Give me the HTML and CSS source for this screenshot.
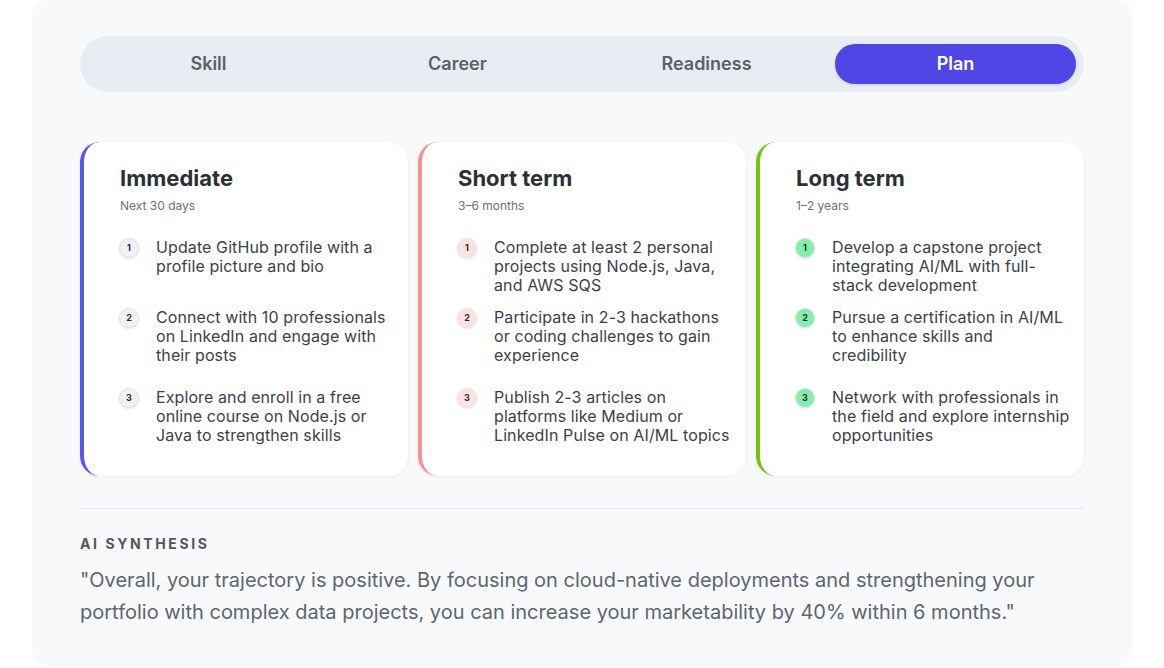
FILE: index.html
```html
<!DOCTYPE html>
<html>
<head>
 <title>Career Plan</title>
 <meta charset="utf-8">
 <link rel="stylesheet" href="styles.css">
</head>
<body>
<div class="panel">
	<div class="tab_bar">
		<div class="tab">Skill</div>
		<div class="tab">Career</div>
		<div class="tab">Readiness</div>
		<div class="tab active">Plan</div>
	</div>

	<div class="plan_cards">
		<div class="plan_card immediate">
			<div class="card_title">Immediate</div>
			<div class="card_sub">Next 30 days</div>
			<div class="step_list">
				<div class="step"><span class="badge">1</span><span class="step_text">Update GitHub profile with a profile picture and bio</span></div>
				<div class="step"><span class="badge">2</span><span class="step_text">Connect with 10 professionals on LinkedIn and engage with their posts</span></div>
				<div class="step last"><span class="badge">3</span><span class="step_text">Explore and enroll in a free online course on Node.js or Java to strengthen skills</span></div>
			</div>
		</div>
		<div class="plan_card short">
			<div class="card_title">Short term</div>
			<div class="card_sub">3–6 months</div>
			<div class="step_list">
				<div class="step"><span class="badge">1</span><span class="step_text">Complete at least 2 personal projects using Node.js, Java, and AWS SQS</span></div>
				<div class="step"><span class="badge">2</span><span class="step_text">Participate in 2-3 hackathons or coding challenges to gain experience</span></div>
				<div class="step last"><span class="badge">3</span><span class="step_text">Publish 2-3 articles on platforms like Medium or LinkedIn Pulse on AI/ML topics</span></div>
			</div>
		</div>
		<div class="plan_card long">
			<div class="card_title">Long term</div>
			<div class="card_sub">1–2 years</div>
			<div class="step_list">
				<div class="step"><span class="badge">1</span><span class="step_text">Develop a capstone project integrating AI/ML with full-stack development</span></div>
				<div class="step"><span class="badge">2</span><span class="step_text">Pursue a certification in AI/ML to enhance skills and credibility</span></div>
				<div class="step last"><span class="badge">3</span><span class="step_text">Network with professionals in the field and explore internship opportunities</span></div>
			</div>
		</div>
	</div>

	<div class="synthesis">
		<div class="synth_label">AI SYNTHESIS</div>
		<p class="synth_text">"Overall, your trajectory is positive. By focusing on cloud-native deployments and strengthening your portfolio with complex data projects, you can increase your marketability by 40% within 6 months."</p>
	</div>
</div>
</body>
</html>
```

FILE: styles.css
```css
	body {
		margin: 0;
		background: #ffffff;
		font-family: Inter, "Noto Sans", sans-serif;
	}

	.panel {
		box-sizing: border-box;
		margin-left: 32px;
		width: 1100px;
		height: 666px;
		padding: 36px 48px 0 48px;
		background: #f8f9fb;
		border-radius: 16px;
	}

	/* tabs */
	.tab_bar {
		display: flex;
		gap: 8px;
		padding: 8px;
		background: #e8edf4;
		border-radius: 28px;
	}

	.tab {
		flex: 1;
		height: 40px;
		line-height: 40px;
		text-align: center;
		font-size: 18px;
		font-weight: 600;
		color: #5b6168;
		border-radius: 20px;
	}

	.tab.active {
		background: #4f46e5;
		color: #ffffff;
		box-shadow: 0 1px 3px rgba(40, 40, 120, 0.18);
	}

	/* cards */
	.plan_cards {
		display: grid;
		grid-template-columns: 1fr 1fr 1fr;
		gap: 10px;
		margin-top: 50px;
	}

	.plan_card {
		background: #ffffff;
		border-radius: 20px;
		border-left: 4px solid #5b55f5;
		padding: 22px 14px 31px 36px;
		box-shadow: 0 1px 4px rgba(30, 40, 60, 0.05);
	}

	.plan_card.short { border-left-color: #f59292; }
	.plan_card.long { border-left-color: #78c30c; }

	.card_title {
		font-size: 22px;
		line-height: 28px;
		font-weight: 700;
		color: #2a3036;
	}

	.card_sub {
		margin-top: 6px;
		font-size: 12px;
		line-height: 16px;
		color: #6b7079;
	}

	.step_list {
		display: flex;
		flex-direction: column;
		gap: 13px;
		margin-top: 24px;
	}

	.step {
		display: flex;
		gap: 17px;
		min-height: 57px;
	}

	.step.last { margin-top: 10px; }

	.badge {
		flex: none;
		box-sizing: border-box;
		width: 20px;
		height: 20px;
		margin-left: -1px;
		border-radius: 50%;
		background: #eef1f5;
		border: 1px solid #dfe4eb;
		box-shadow: 0 1px 3px rgba(30, 40, 60, 0.12);
		font-size: 9px;
		font-weight: 700;
		line-height: 18px;
		text-align: center;
		color: #2b2f33;
	}

	.short .badge { background: #fde2e2; border-color: #ebe3e6; }
	.long .badge { background: #86edac; border-color: #dde6e1; }

	.step_text {
		font-size: 16px;
		line-height: 19px;
		letter-spacing: 0.1px;
		color: #3b4148;
	}

	/* synthesis */
	.synthesis {
		margin-top: 32px;
		border-top: 1px solid #e5e9f0;
		padding-top: 26px;
	}

	.synth_label {
		font-size: 14px;
		line-height: 18px;
		font-weight: 700;
		letter-spacing: 2.6px;
		color: #505860;
	}

	.synth_text {
		margin: 11px 0 0 0;
		font-size: 20px;
		line-height: 32px;
		color: #5d6670;
	}
```
